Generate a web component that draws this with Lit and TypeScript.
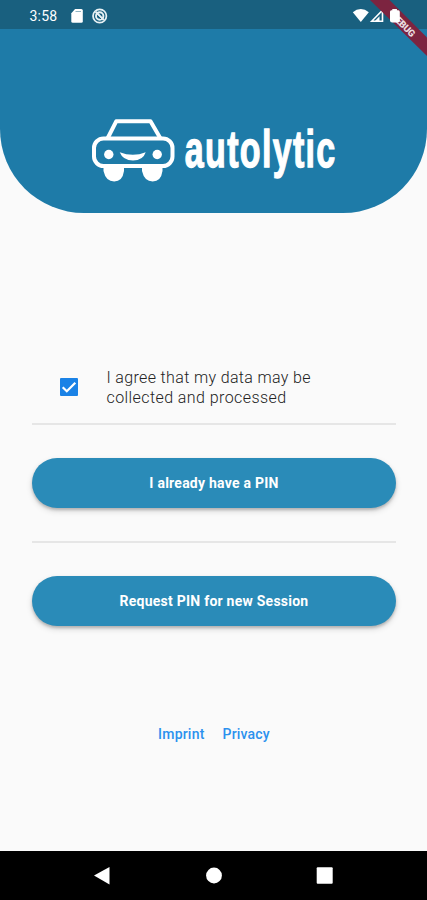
import { LitElement, html, css, svg } from "lit";
import { customElement, state } from "lit/decorators.js";

@customElement("status-bar")
class StatusBar extends LitElement {
  static styles = css`
    :host { display: flex; height: 29px; background: #19607f; position: relative; color: #fff; font: 14px/32px Roboto, sans-serif; letter-spacing: .2px; }
    .time { margin-left: 29.5px; width: 40.5px; }
    .icons { display: block; flex: none; }
    .right { margin-left: auto; }
    .ribbon { position: absolute; top: 0; right: 0; }
  `;
  render() {
    return html`
      <span class="time">3:58</span>
      <svg class="icons" width="40" height="29" viewBox="70 0 40 29">
        <path d="M71.3 13.2l3.8-4.2h6.2q1.5 0 1.500 1.500v10.700q0 1.500-1.500 1.500h-8.500q-1.500 0-1.500-1.500z" fill="#fff"/>
        <path d="M75.500 11.500h5.500" stroke="#8fb3c2" stroke-width="1"/>
        <circle cx="99.700" cy="16" r="6.700" fill="none" stroke="#e9f2f5" stroke-width="1.700"/>
        <circle cx="99.700" cy="16" r="3.700" fill="none" stroke="#e9f2f5" stroke-width="1.900"/>
        <path d="M95.600 11.800l8.200 8.200" stroke="#e9f2f5" stroke-width="2"/>
        <path d="M97.500 15.500l3.500 3.500" stroke="#19607f" stroke-width="1"/>
      </svg>
      <svg class="icons right" width="77" height="29" viewBox="350 0 77 29">
        <path d="M352.800 12.200q3.700-3.300 8-3.300t8 3.300L360.800 22z" fill="#fff"/>
        <path d="M371.700 21.300L382.500 10.200v11.100z" fill="none" stroke="#fff" stroke-width="1.600"/>
        <path d="M375 21L379.500 16.300v4.700z" fill="#fff"/>
      </svg>
      <svg class="ribbon" width="60" height="58" viewBox="367 0 60 58">
        <path d="M370 0H389.500L427 37.500V56z" fill="#7c2440"/>
        <text transform="translate(403.200 24.800) rotate(45)" y="3.300" text-anchor="middle" font-family="Roboto, sans-serif" font-weight="900" font-size="9.500" letter-spacing="-.2" fill="#eadde1">DEBUG</text>
        <path d="M392.300 9h4.600v1.300h1.500q1.400.2 1.400 1.600v8.600q0 2-2 2h-5.600q-2.200 0-2.200-2v-8.600q0-1.400 1.300-1.600h1z" fill="#fff"/>
      </svg>
    `;
  }
}

@customElement("brand-logo")
class BrandLogo extends LitElement {
  static styles = css`:host, svg { display: block; }`;
  render() {
    return html`<svg width="250" height="80" viewBox="90 110 250 80">
      <g fill="none" stroke="#fff" stroke-width="4" stroke-linejoin="round">
        <path d="M107.500 138.500L116.200 121.300H150.500L160.500 138.500"/>
        <rect x="94" y="138.500" width="78.500" height="27.500" rx="9.500"/>
      </g>
      <circle cx="108.800" cy="154.500" r="4.700" fill="#fff"/>
      <circle cx="157.200" cy="154.500" r="4.700" fill="#fff"/>
      <path d="M119.700 152.200Q133 157.500 145.700 152.200Q143 160.500 133 160.500Q123 160.500 119.700 152.200z" fill="#fff"/>
      <path d="M103.500 167h20.500v4q-1.500 10.500-9.800 10.500T103.500 171zM142 167h20.500v4q-1.500 10.500-9.800 10.500T142 171z" fill="#fff"/>
      <text transform="translate(184.800 167) scale(.66 1)" font-family="Liberation Sans, sans-serif" font-weight="700" font-size="51.500" textLength="228" lengthAdjust="spacing" fill="#fff" stroke="#fff" stroke-width="1.300">autolytic</text>
    </svg>`;
  }
}

@customElement("app-root")
class AppRoot extends LitElement {
  @state() private agreed = true;

  static styles = css`
    :host { display: flex; flex-direction: column; width: 427px; height: 900px; background: #fafafa; font-family: Roboto, sans-serif; overflow: hidden; }
    * { box-sizing: border-box; }
    header { height: 213px; flex: none; background: #1e7ba8; border-radius: 0 0 84px 84px; }
    brand-logo { margin: 81px 0 0 90px; }
    main { flex: 1; padding: 149px 31px 0 32px; }
    .consent { display: flex; align-items: center; height: 50px; padding-left: 28px; }
    .box { width: 18px; height: 18px; background: #1a82e6; border-radius: 1px; flex: none; }
    .box svg { display: block; }
    .label { margin: 1px 0 0 28.500px; font-size: 16px; line-height: 20px; letter-spacing: .35px; color: #222; font-weight: 300; width: 230px; }
    .label .last { letter-spacing: .42px; }
    .line { height: 2px; background: #e6e6e6; margin-top: 11px; }
    .line.second { margin-top: 33px; }
    button { display: block; width: 100%; height: 50px; margin-top: 33px; padding: 0; border: 0; border-radius: 25px; background: #2a8bb8; color: #fff; font: 700 14px Roboto, sans-serif; letter-spacing: .24px; box-shadow: 0 2px 3px rgba(0,0,0,.2), 0 3px 6px rgba(0,0,0,.14); }
    .links { display: flex; justify-content: center; gap: 18px; margin-top: 99px; font-size: 14px; line-height: 18px; font-weight: 500; letter-spacing: .2px; color: #2b91ee; }
    nav { height: 49px; flex: none; background: #000; }
    nav svg { display: block; }
  `;
  render() {
    return html`
      <header><status-bar></status-bar><brand-logo></brand-logo></header>
      <main>
        <div class="consent" @click=${() => (this.agreed = !this.agreed)}>
          <div class="box"><svg width="18" height="18" viewBox="0 0 18 18">${this.agreed
            ? svg`<path d="M2.700 9.200L6.800 13.200L15.300 4.700" fill="none" stroke="#fff" stroke-width="2.200"/>`
            : null}</svg></div>
          <div class="label">I agree that my data may be<br><span class="last">collected and processed</span></div>
        </div>
        <div class="line"></div>
        <button>I already have a PIN</button>
        <div class="line second"></div>
        <button>Request PIN for new Session</button>
        <div class="links"><span>Imprint</span><span>Privacy</span></div>
      </main>
      <nav><svg width="427" height="49" viewBox="0 851 427 49" fill="#fff">
        <path d="M94 875.500L109.500 867v17.500z"/>
        <circle cx="214" cy="875.500" r="7.900"/>
        <rect x="316.700" y="867.300" width="16" height="16.500" rx="1"/>
      </svg></nav>
    `;
  }
}
